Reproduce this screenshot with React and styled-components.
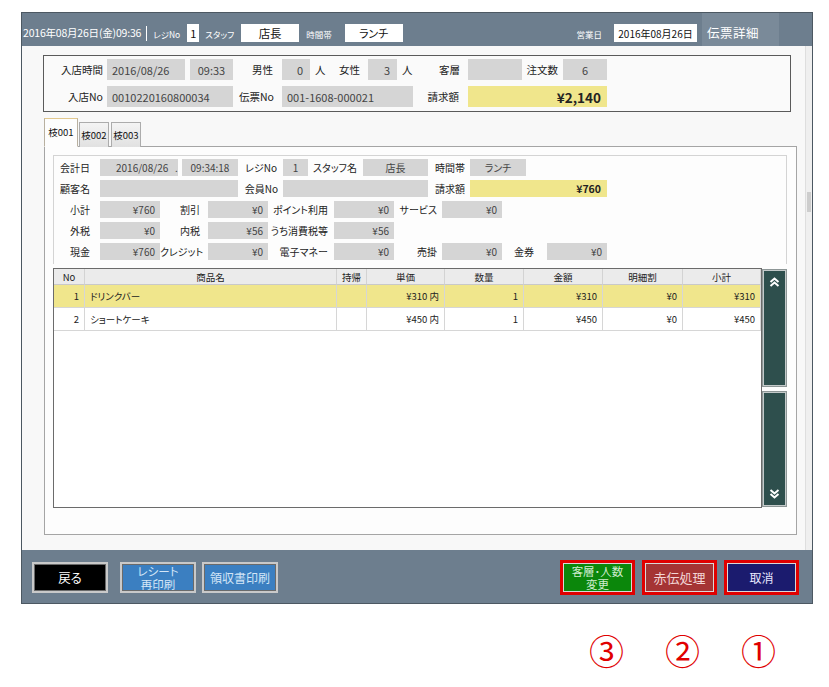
import React from "react";
import styled, { createGlobalStyle } from "styled-components";

const GlobalStyle = createGlobalStyle`
  body {
    margin: 0;
    background: #fff;
    font-family: "Noto Sans CJK JP", "Noto Sans", sans-serif;
    font-feature-settings: "palt";
  }
`;

const Page = styled.div`
  width: 829px;
  height: 687px;
  padding: 12px 0 0 21px;
  box-sizing: border-box;
  overflow: hidden;
`;

const Window = styled.div`
  width: 790px;
  border: 1px solid #4c5862;
  display: flex;
  flex-direction: column;
`;

// ---- top bar
const TopBar = styled.div`
  height: 33px;
  background: #6d7e8e;
  display: flex;
  align-items: stretch;
  color: #fff;
`;
const BarGroup = styled.div`
  display: flex;
  align-items: flex-end;
  padding: 0 0 4px 1px;
  flex: ${({ $grow }) => ($grow ? 1 : "none")};
  justify-content: ${({ $end }) => ($end ? "flex-end" : "flex-start")};
`;
const BarDate = styled.span`
  font-size: 10.5px;
  line-height: 18px;
  letter-spacing: -0.2px;
`;
const BarSep = styled.span`
  width: 1px;
  height: 15px;
  background: #fff;
  margin: 0 6px 1px 5px;
`;
const BarLabel = styled.span`
  font-size: 8.5px;
  line-height: 16px;
  margin: 0 ${({ $mr }) => $mr || 7}px 0 ${({ $ml }) => $ml || 0}px;
`;
const BarBox = styled.div`
  width: ${({ $w }) => $w}px;
  height: 18px;
  background: #fff;
  color: #111;
  font-size: ${({ $fs }) => $fs || 11}px;
  display: flex;
  align-items: center;
  justify-content: center;
`;
const BarTitle = styled.div`
  width: 72px;
  background: #7a8a99;
  padding: 5px 0 0 5px;
  display: flex;
  align-items: center;
  font-size: 12.5px;
  letter-spacing: 0.5px;
  margin-left: 5px;
`;
const BarTail = styled.div`
  width: 33px;
`;

// ---- content
const Content = styled.div`
  height: 504px;
  display: flex;
  background: #f8f8f8;
`;
const Main = styled.div`
  flex: 1;
  padding: 9px 8px 0 21px;
  display: flex;
  flex-direction: column;
`;
const ScrollTrack = styled.div`
  width: 11px;
  background: #efefef;
  border-left: 1px solid #dedede;
  padding-top: 146px;
  box-sizing: border-box;
`;
const ScrollThumb = styled.div`
  height: 20px;
  margin: 0 1px;
  background: #cdcdcd;
`;

const HeaderPanel = styled.div`
  width: 748px;
  box-sizing: border-box;
  border: 1px solid #5a5a5a;
  padding: 3px 0 4px;
  display: flex;
  flex-direction: column;
  gap: 6px;
  background: #fafafa;
`;

const Row = styled.div`
  display: flex;
  align-items: center;
  height: ${({ $h }) => $h}px;
`;

const Label = styled.span`
  flex: none;
  width: ${({ $w }) => $w}px;
  box-sizing: border-box;
  text-align: ${({ $align }) => $align || "right"};
  padding: 0 ${({ $pr }) => $pr ?? 6}px 0 ${({ $pl }) => $pl ?? 0}px;
  font-size: ${({ $fs }) => $fs || 10}px;
  color: #222;
  white-space: nowrap;
`;

const Box = styled.div`
  flex: none;
  width: ${({ $w }) => $w}px;
  height: 100%;
  box-sizing: border-box;
  margin-left: ${({ $ml }) => $ml || 0}px;
  background: ${({ $yellow }) => ($yellow ? "#f0e68c" : "#d5d5d5")};
  display: flex;
  align-items: center;
  justify-content: ${({ $align }) =>
    $align === "left" ? "flex-start" : $align === "center" ? "center" : "flex-end"};
  padding: 0 ${({ $px }) => $px ?? 5}px;
  font-size: ${({ $fs }) => $fs || 10}px;
  font-weight: ${({ $bold }) => ($bold ? 700 : 400)};
  color: ${({ $bold }) => ($bold ? "#222" : "#444")};
  white-space: pre;
`;

// ---- tabs
const TabStrip = styled.div`
  display: flex;
  align-items: flex-end;
  height: 29px;
  margin: 6px 0 -1px 1px;
  position: relative;
  z-index: 1;
`;
const Tab = styled.div`
  height: ${({ $active }) => ($active ? 29 : 25)}px;
  width: ${({ $active }) => ($active ? 34 : 30)}px;
  box-sizing: border-box;
  margin-right: ${({ $active }) => ($active ? 1 : 2)}px;
  border: 1px solid ${({ $active }) => ($active ? "#b8b0a0" : "#acacac")};
  border-top-color: ${({ $active }) => ($active ? "#e2c88e" : "#acacac")};
  border-bottom: ${({ $active }) => ($active ? "1px solid #fdfdfd" : "none")};
  background: ${({ $active }) =>
    $active ? "#fdfdfd" : "linear-gradient(#f4f4f4, #e1e1e1)"};
  font-size: 9.5px;
  color: #111;
  display: flex;
  align-items: center;
  justify-content: center;
  padding-bottom: ${({ $active }) => ($active ? 2 : 0)}px;
`;
const TabPanel = styled.div`
  width: 753px;
  height: 389px;
  margin-left: 1px;
  box-sizing: border-box;
  border: 1px solid #a5a5a5;
  background: #fdfdfd;
  padding: 8px 9px 0 8px;
  display: flex;
  flex-direction: column;
`;
const FieldsPanel = styled.div`
  height: 109px;
  box-sizing: border-box;
  border: 1px solid #d4d4d4;
  border-bottom: none;
  padding-top: 3px;
  display: flex;
  flex-direction: column;
  gap: 4px;
`;

// ---- table
const TableArea = styled.div`
  display: flex;
  margin-top: 4px;
  height: 240px;
`;
const TableBox = styled.div`
  width: 709px;
  box-sizing: border-box;
  border: 1px solid #6b6b6b;
  background: #fff;
`;
const Grid = styled.div`
  display: grid;
  grid-template-columns: 31px 252px 30px 78px 79px 79px 80px 78px;
`;
const HeadCell = styled.div`
  height: 16px;
  box-sizing: border-box;
  background: #ebebeb;
  border-right: 1px solid #d3d3d3;
  border-bottom: 1px solid #c9c9c9;
  font-size: 9.5px;
  color: #222;
  display: flex;
  align-items: center;
  justify-content: center;
`;
const Cell = styled.div`
  height: 23px;
  box-sizing: border-box;
  background: ${({ $hl }) => ($hl ? "#f0e68c" : "#fff")};
  border-right: 1px solid #d6d6d6;
  border-bottom: 1px solid #d6d6d6;
  font-size: 9.5px;
  color: #222;
  display: flex;
  align-items: center;
  justify-content: ${({ $left }) => ($left ? "flex-start" : "flex-end")};
  padding: 0 5px;
  white-space: pre;
`;

const ScrollCol = styled.div`
  width: 25px;
  margin-top: 1px;
  display: flex;
  flex-direction: column;
  gap: 4px;
`;
const ScrollBtn = styled.div`
  height: ${({ $h }) => $h}px;
  box-sizing: border-box;
  background: #2e4f4d;
  border: 1px solid #8d9696;
  box-shadow: inset 0 0 0 1px #c4caca;
  display: flex;
  justify-content: center;
  align-items: ${({ $down }) => ($down ? "flex-end" : "flex-start")};
  padding: 7px 0;
`;

// ---- bottom bar
const BottomBar = styled.div`
  height: 53px;
  background: #6d7e8e;
  display: flex;
  align-items: flex-start;
  padding: 0 13px 0 10px;
`;
const BtnGroup = styled.div`
  display: flex;
  gap: ${({ $gap }) => $gap}px;
  margin-top: ${({ $mt }) => $mt}px;
  margin-left: ${({ $auto }) => ($auto ? "auto" : "0")};
`;
const Btn = styled.div`
  width: ${({ $w }) => $w || 76}px;
  height: ${({ $annot }) => ($annot ? 35 : 31)}px;
  box-sizing: border-box;
  background: ${({ $bg }) => $bg};
  color: ${({ $fg }) => $fg};
  border: ${({ $annot }) => ($annot ? "3px solid #e00000" : "2px solid #c9c9c9")};
  box-shadow: inset 0 0 0 1px ${({ $annot }) => ($annot ? "#d8d8d8" : "#6a6a6a")};
  margin-left: ${({ $ml }) => $ml || 0}px;
  display: flex;
  flex-direction: column;
  align-items: center;
  justify-content: center;
  text-align: center;
  font-size: ${({ $fs }) => $fs || 12}px;
`;
const BtnLine = styled.span`
  display: block;
  font-size: 11.5px;
  line-height: 13px;
`;

const Annotations = styled.div`
  display: flex;
  gap: 41px;
  padding-left: 568px;
  margin-top: 28px;
`;
const Circled = styled.span`
  font-size: 35px;
  line-height: 35px;
  color: #e00000;
  font-family: "Noto Sans CJK JP", "DejaVu Sans", sans-serif;
`;

const Chevrons = ({ down }) => (
  <svg width="11" height="10" viewBox="0 0 11 10">
    <g
      fill="none"
      stroke="#fff"
      strokeWidth="2"
      transform={down ? "rotate(180 5.5 5)" : undefined}
    >
      <polyline points="1.5,5 5.5,1.5 9.5,5" />
      <polyline points="1.5,9 5.5,5.5 9.5,9" />
    </g>
  </svg>
);

const items = [
  { no: 1, name: "ドリンクバー", price: "¥310 内", qty: 1, amount: "¥310", disc: "¥0", sub: "¥310", hl: true },
  { no: 2, name: "ショートケーキ", price: "¥450 内", qty: 1, amount: "¥450", disc: "¥0", sub: "¥450" },
];

const heads = ["No", "商品名", "持帰", "単価", "数量", "金額", "明細割", "小計"];

export default function App() {
  return (
    <Page>
      <GlobalStyle />
      <Window>
        <TopBar>
          <BarGroup>
            <BarDate>2016年08月26日(金)09:36</BarDate>
            <BarSep />
            <BarLabel>レジNo</BarLabel>
            <BarBox $w={12} $fs={11}>1</BarBox>
            <BarLabel $ml={6}>スタッフ</BarLabel>
            <BarBox $w={58} $fs={11.5}>店長</BarBox>
            <BarLabel $ml={7} $mr={13}>時間帯</BarLabel>
            <BarBox $w={58}>ランチ</BarBox>
          </BarGroup>
          <BarGroup $grow $end>
            <BarLabel $mr={12}>営業日</BarLabel>
            <BarBox $w={83} $fs={10}>2016年08月26日</BarBox>
          </BarGroup>
          <BarTitle>伝票詳細</BarTitle>
          <BarTail />
        </TopBar>

        <Content>
          <Main>
            <HeaderPanel>
              <Row $h={21}>
                <Label $w={63} $pr={4} $fs={10.5}>入店時間</Label>
                <Box $w={78} $align="left" $fs={11}>2016/08/26</Box>
                <Box $w={43} $ml={5} $align="center" $fs={11}>09:33</Box>
                <Label $w={49} $pr={9} $fs={10.5}>男性</Label>
                <Box $w={28} $px={7} $fs={11}>0</Box>
                <Label $w={22} $align="left" $pl={5} $fs={10.5}>人</Label>
                <Label $w={36} $pr={8} $fs={10.5}>女性</Label>
                <Box $w={29} $px={7} $fs={11}>3</Box>
                <Label $w={20} $align="left" $pl={5} $fs={10.5}>人</Label>
                <Label $w={51} $pr={8} $fs={10.5}>客層</Label>
                <Box $w={54} />
                <Label $w={41} $pr={5} $fs={10.5}>注文数</Label>
                <Box $w={44} $align="center" $fs={11}>6</Box>
              </Row>
              <Row $h={21}>
                <Label $w={63} $pr={4} $fs={10.5}>入店No</Label>
                <Box $w={126} $align="left" $fs={11}>0010220160800034</Box>
                <Label $w={49} $pr={8} $fs={10.5}>伝票No</Label>
                <Box $w={131} $align="left" $fs={11}>001-1608-000021</Box>
                <Label $w={55} $pr={9} $fs={10.5}>請求額</Label>
                <Box $w={139} $yellow $bold $fs={13.5} $px={6}>¥2,140</Box>
              </Row>
            </HeaderPanel>

            <TabStrip>
              <Tab $active>枝001</Tab>
              <Tab>枝002</Tab>
              <Tab>枝003</Tab>
            </TabStrip>

            <TabPanel>
              <FieldsPanel>
                <Row $h={17}>
                  <Label $w={46} $pr={10}>会計日</Label>
                  <Box $w={78} $align="left" $px={16}>2016/08/26   .</Box>
                  <Box $w={56} $ml={4} $align="center">09:34:18</Box>
                  <Label $w={45} $pr={6}>レジNo</Label>
                  <Box $w={25} $align="center">1</Box>
                  <Label $w={55} $align="left" $pl={5}>スタッフ名</Label>
                  <Box $w={65} $align="center">店長</Box>
                  <Label $w={42} $align="left" $pl={7}>時間帯</Label>
                  <Box $w={56} $align="center">ランチ</Box>
                </Row>
                <Row $h={17}>
                  <Label $w={46} $pr={10}>顧客名</Label>
                  <Box $w={138} />
                  <Label $w={45} $pr={5}>会員No</Label>
                  <Box $w={145} />
                  <Label $w={42} $align="left" $pl={7}>請求額</Label>
                  <Box $w={137} $yellow $bold $fs={10.5} $px={6}>¥760</Box>
                </Row>
                <Row $h={17}>
                  <Label $w={46} $pr={10}>小計</Label>
                  <Box $w={60}>¥760</Box>
                  <Label $w={48} $pr={8}>割引</Label>
                  <Box $w={60}>¥0</Box>
                  <Label $w={66} $pr={6}>ポイント利用</Label>
                  <Box $w={60}>¥0</Box>
                  <Label $w={48} $pr={5}>サービス</Label>
                  <Box $w={60}>¥0</Box>
                </Row>
                <Row $h={17}>
                  <Label $w={46} $pr={10}>外税</Label>
                  <Box $w={60}>¥0</Box>
                  <Label $w={48} $pr={8}>内税</Label>
                  <Box $w={60}>¥56</Box>
                  <Label $w={66} $pr={6}>うち消費税等</Label>
                  <Box $w={60}>¥56</Box>
                </Row>
                <Row $h={17}>
                  <Label $w={46} $pr={10}>現金</Label>
                  <Box $w={60}>¥760</Box>
                  <Label $w={48} $pr={8}>クレジット</Label>
                  <Box $w={60}>¥0</Box>
                  <Label $w={66} $pr={6}>電子マネー</Label>
                  <Box $w={60}>¥0</Box>
                  <Label $w={48} $pr={5}>売掛</Label>
                  <Box $w={60}>¥0</Box>
                  <Label $w={45} $pr={13}>金券</Label>
                  <Box $w={60}>¥0</Box>
                </Row>
              </FieldsPanel>

              <TableArea>
                <TableBox>
                  <Grid>
                    {heads.map((h) => (
                      <HeadCell key={h}>{h}</HeadCell>
                    ))}
                    {items.map((it) => (
                      <React.Fragment key={it.no}>
                        <Cell $hl={it.hl}>{it.no}</Cell>
                        <Cell $hl={it.hl} $left>{it.name}</Cell>
                        <Cell $hl={it.hl} />
                        <Cell $hl={it.hl}>{it.price}</Cell>
                        <Cell $hl={it.hl}>{it.qty}</Cell>
                        <Cell $hl={it.hl}>{it.amount}</Cell>
                        <Cell $hl={it.hl}>{it.disc}</Cell>
                        <Cell $hl={it.hl}>{it.sub}</Cell>
                      </React.Fragment>
                    ))}
                  </Grid>
                </TableBox>
                <ScrollCol>
                  <ScrollBtn $h={118}>
                    <Chevrons />
                  </ScrollBtn>
                  <ScrollBtn $h={116} $down>
                    <Chevrons down />
                  </ScrollBtn>
                </ScrollCol>
              </TableArea>
            </TabPanel>
          </Main>
          <ScrollTrack>
            <ScrollThumb />
          </ScrollTrack>
        </Content>

        <BottomBar>
          <BtnGroup $gap={0} $mt={12}>
            <Btn $bg="#000" $fg="#fff" $fs={12.5}>戻る</Btn>
            <Btn $bg="#3b7fc1" $fg="#d4e6f7" $ml={12}>
              <BtnLine>レシート</BtnLine>
              <BtnLine>再印刷</BtnLine>
            </Btn>
            <Btn $bg="#3b7fc1" $fg="#d4e6f7" $ml={6}>領収書印刷</Btn>
          </BtnGroup>
          <BtnGroup $gap={7} $mt={10} $auto>
            <Btn $annot $w={75} $bg="#0b870b" $fg="#cfeccf">
              <BtnLine>客層･人数</BtnLine>
              <BtnLine>変更</BtnLine>
            </Btn>
            <Btn $annot $w={75} $bg="#a53434" $fg="#f2d6d6" $fs={13}>赤伝処理</Btn>
            <Btn $annot $w={75} $bg="#1b1b6e" $fg="#e8e8ff">取消</Btn>
          </BtnGroup>
        </BottomBar>
      </Window>

      <Annotations>
        <Circled>③</Circled>
        <Circled>②</Circled>
        <Circled>①</Circled>
      </Annotations>
    </Page>
  );
}
